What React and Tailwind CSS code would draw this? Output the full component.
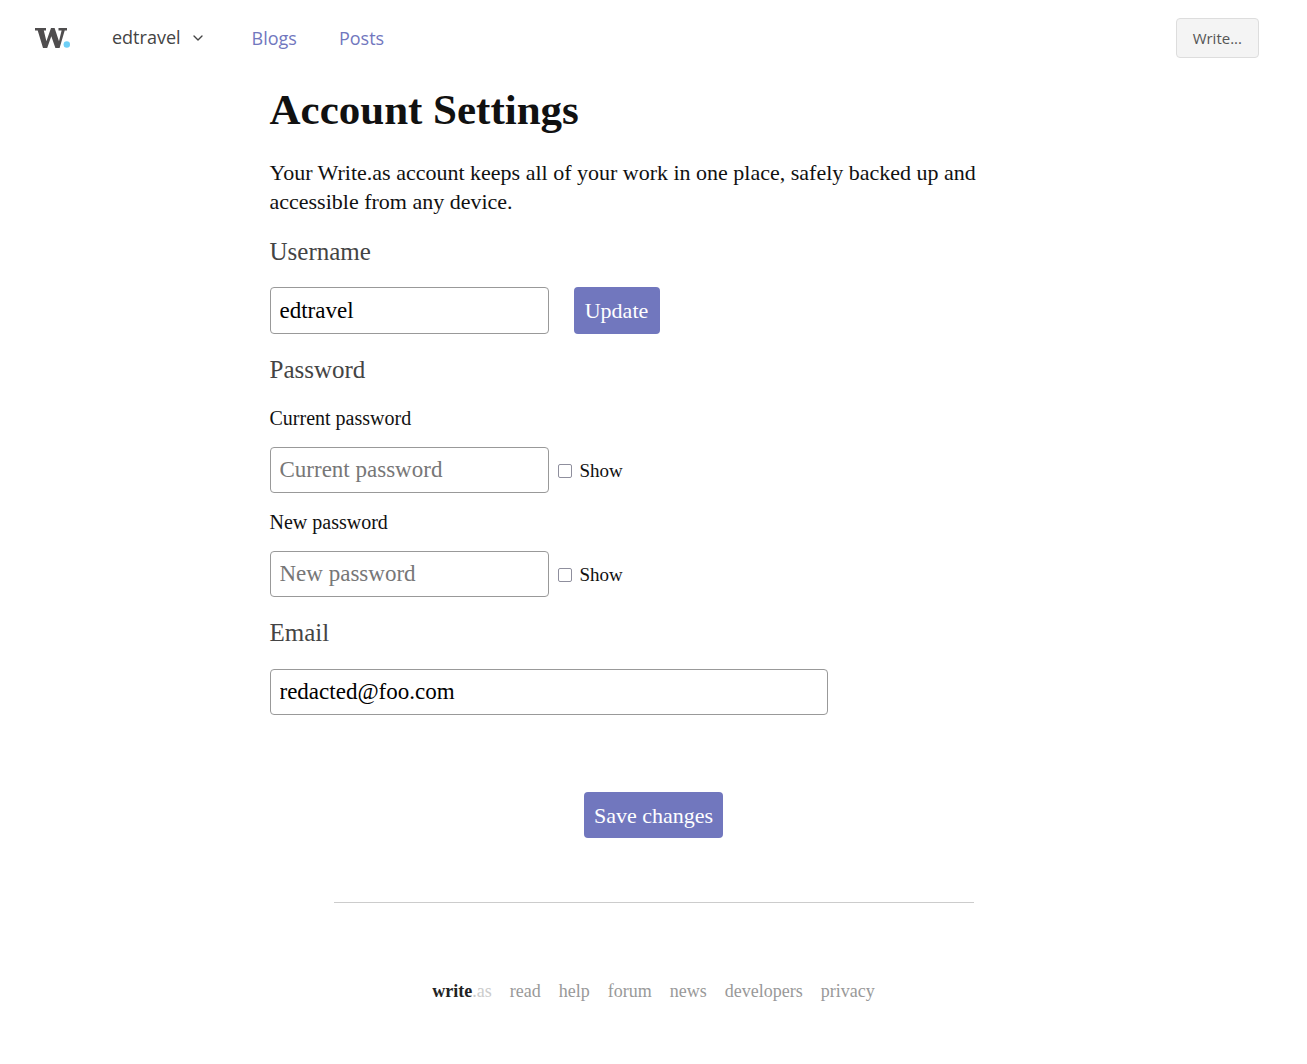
import { useState } from 'react';
import { FiChevronDown } from 'react-icons/fi';

const navLinks = [
  { href: '#blogs', name: 'Blogs' },
  { href: '#posts', name: 'Posts' },
];

const footerLinks = ['read', 'help', 'forum', 'news', 'developers', 'privacy'];

const inputClass =
  'rounded-[4px] border border-[#999] bg-white px-[9px] text-[23px] text-black placeholder:text-[#777] outline-none focus:border-[#7177be]';
const buttonClass = 'rounded-[4px] bg-[#7177be] text-[22px] text-white hover:bg-[#5f65ae]';

function Logo() {
  return (
    <svg viewBox="0 0 36 22" className="h-[22px] w-9" aria-hidden="true">
      <path
        fill="#4f4d4e"
        d="M0 1h11v2.500H8.800l2.600 10.800L16 1h3.600l4.400 13.300L26.600 3.500h-3.100V1H32v2.500h-2.300L24.600 21h-4.200L16.300 9.200 12.200 21H8L2.700 3.500H0z"
      />
      <circle cx="31.800" cy="17.500" r="3.200" fill="#6dcff6" />
    </svg>
  );
}

function Header() {
  return (
    <header className="flex items-center justify-between pt-[18px] pr-12 pl-[35px] font-['Open_Sans',sans-serif]">
      <nav className="flex items-center text-[18px]">
        <a href="#home" aria-label="Write.as">
          <Logo />
        </a>
        <button type="button" className="ml-[41px] flex items-center gap-[9px] pb-[2px] text-[#444]">
          edtravel
          <FiChevronDown className="mt-[2px] h-4 w-4" strokeWidth={2} />
        </button>
        <div className="ml-[46px] flex gap-[42px]">
          {navLinks.map((link) => (
            <a key={link.name} href={link.href} className="text-[#7177be]">
              {link.name}
            </a>
          ))}
        </div>
      </nav>
      <a
        href="#new"
        className="flex h-10 items-center rounded-[4px] border border-[#ddd] bg-[#f4f4f4] px-4 text-[15px] text-[#555]"
      >
        Write...
      </a>
    </header>
  );
}

function SectionTitle({ htmlFor, children }) {
  return (
    <h2 className="text-[25px] leading-8 text-[#444]">
      {htmlFor ? <label htmlFor={htmlFor}>{children}</label> : children}
    </h2>
  );
}

function PasswordField({ id, label }) {
  const [show, setShow] = useState(false);

  return (
    <div>
      <label htmlFor={id} className="block text-[20px] leading-6">
        {label}
      </label>
      <div className="mt-[17px] flex items-center">
        <input
          id={id}
          type={show ? 'text' : 'password'}
          placeholder={label}
          className={`${inputClass} h-[46px] w-[279px]`}
        />
        <label className="ml-[9px] flex items-center gap-2 pt-[2px] text-[19px]">
          <input
            type="checkbox"
            checked={show}
            onChange={(e) => setShow(e.target.checked)}
            className="h-[14px] w-[14px] appearance-none rounded-[2px] border border-[#8f8f9d] bg-white checked:bg-[#7177be]"
          />
          Show
        </label>
      </div>
    </div>
  );
}

function Footer() {
  return (
    <footer className="mx-auto mt-16 max-w-[640px] border-t border-[#ccc] pt-[76px] pb-14">
      <nav className="flex justify-center gap-[18px] text-[18px] leading-6 text-[#999]">
        <a href="#home" className="text-[#ccc]">
          <strong className="text-[#222]">write</strong>.as
        </a>
        {footerLinks.map((name) => (
          <a key={name} href={`#${name}`}>
            {name}
          </a>
        ))}
      </nav>
    </footer>
  );
}

export default function App() {
  return (
    <div className="min-h-screen bg-white font-['Liberation_Serif',serif] text-[#111]">
      <Header />
      <main className="mx-auto mt-6 max-w-3xl">
        <h1 className="text-[43px] leading-[56px] font-bold">Account Settings</h1>
        <p className="mt-5 text-[22px] leading-[29px]">
          Your Write.as account keeps all of your work in one place, safely backed up and accessible
          from any device.
        </p>

        <form className="mt-5" onSubmit={(e) => e.preventDefault()}>
          <SectionTitle htmlFor="username">Username</SectionTitle>
          <div className="mt-[19px] flex gap-[25px]">
            <input
              id="username"
              type="text"
              defaultValue="edtravel"
              className={`${inputClass} h-[47px] w-[279px]`}
            />
            <button type="button" className={`${buttonClass} h-[47px] w-[86px]`}>
              Update
            </button>
          </div>

          <div className="mt-5">
            <SectionTitle>Password</SectionTitle>
            <div className="mt-5 flex flex-col gap-[17px]">
              <PasswordField id="current-password" label="Current password" />
              <PasswordField id="new-password" label="New password" />
            </div>
          </div>

          <div className="mt-5">
            <SectionTitle htmlFor="email">Email</SectionTitle>
            <input
              id="email"
              type="email"
              defaultValue="redacted@foo.com"
              className={`${inputClass} mt-5 block h-[46px] w-full max-w-[558px]`}
            />
          </div>

          <div className="mt-[77px] text-center">
            <button type="submit" className={`${buttonClass} h-[46px] w-[139px]`}>
              Save changes
            </button>
          </div>
        </form>
      </main>
      <Footer />
    </div>
  );
}
